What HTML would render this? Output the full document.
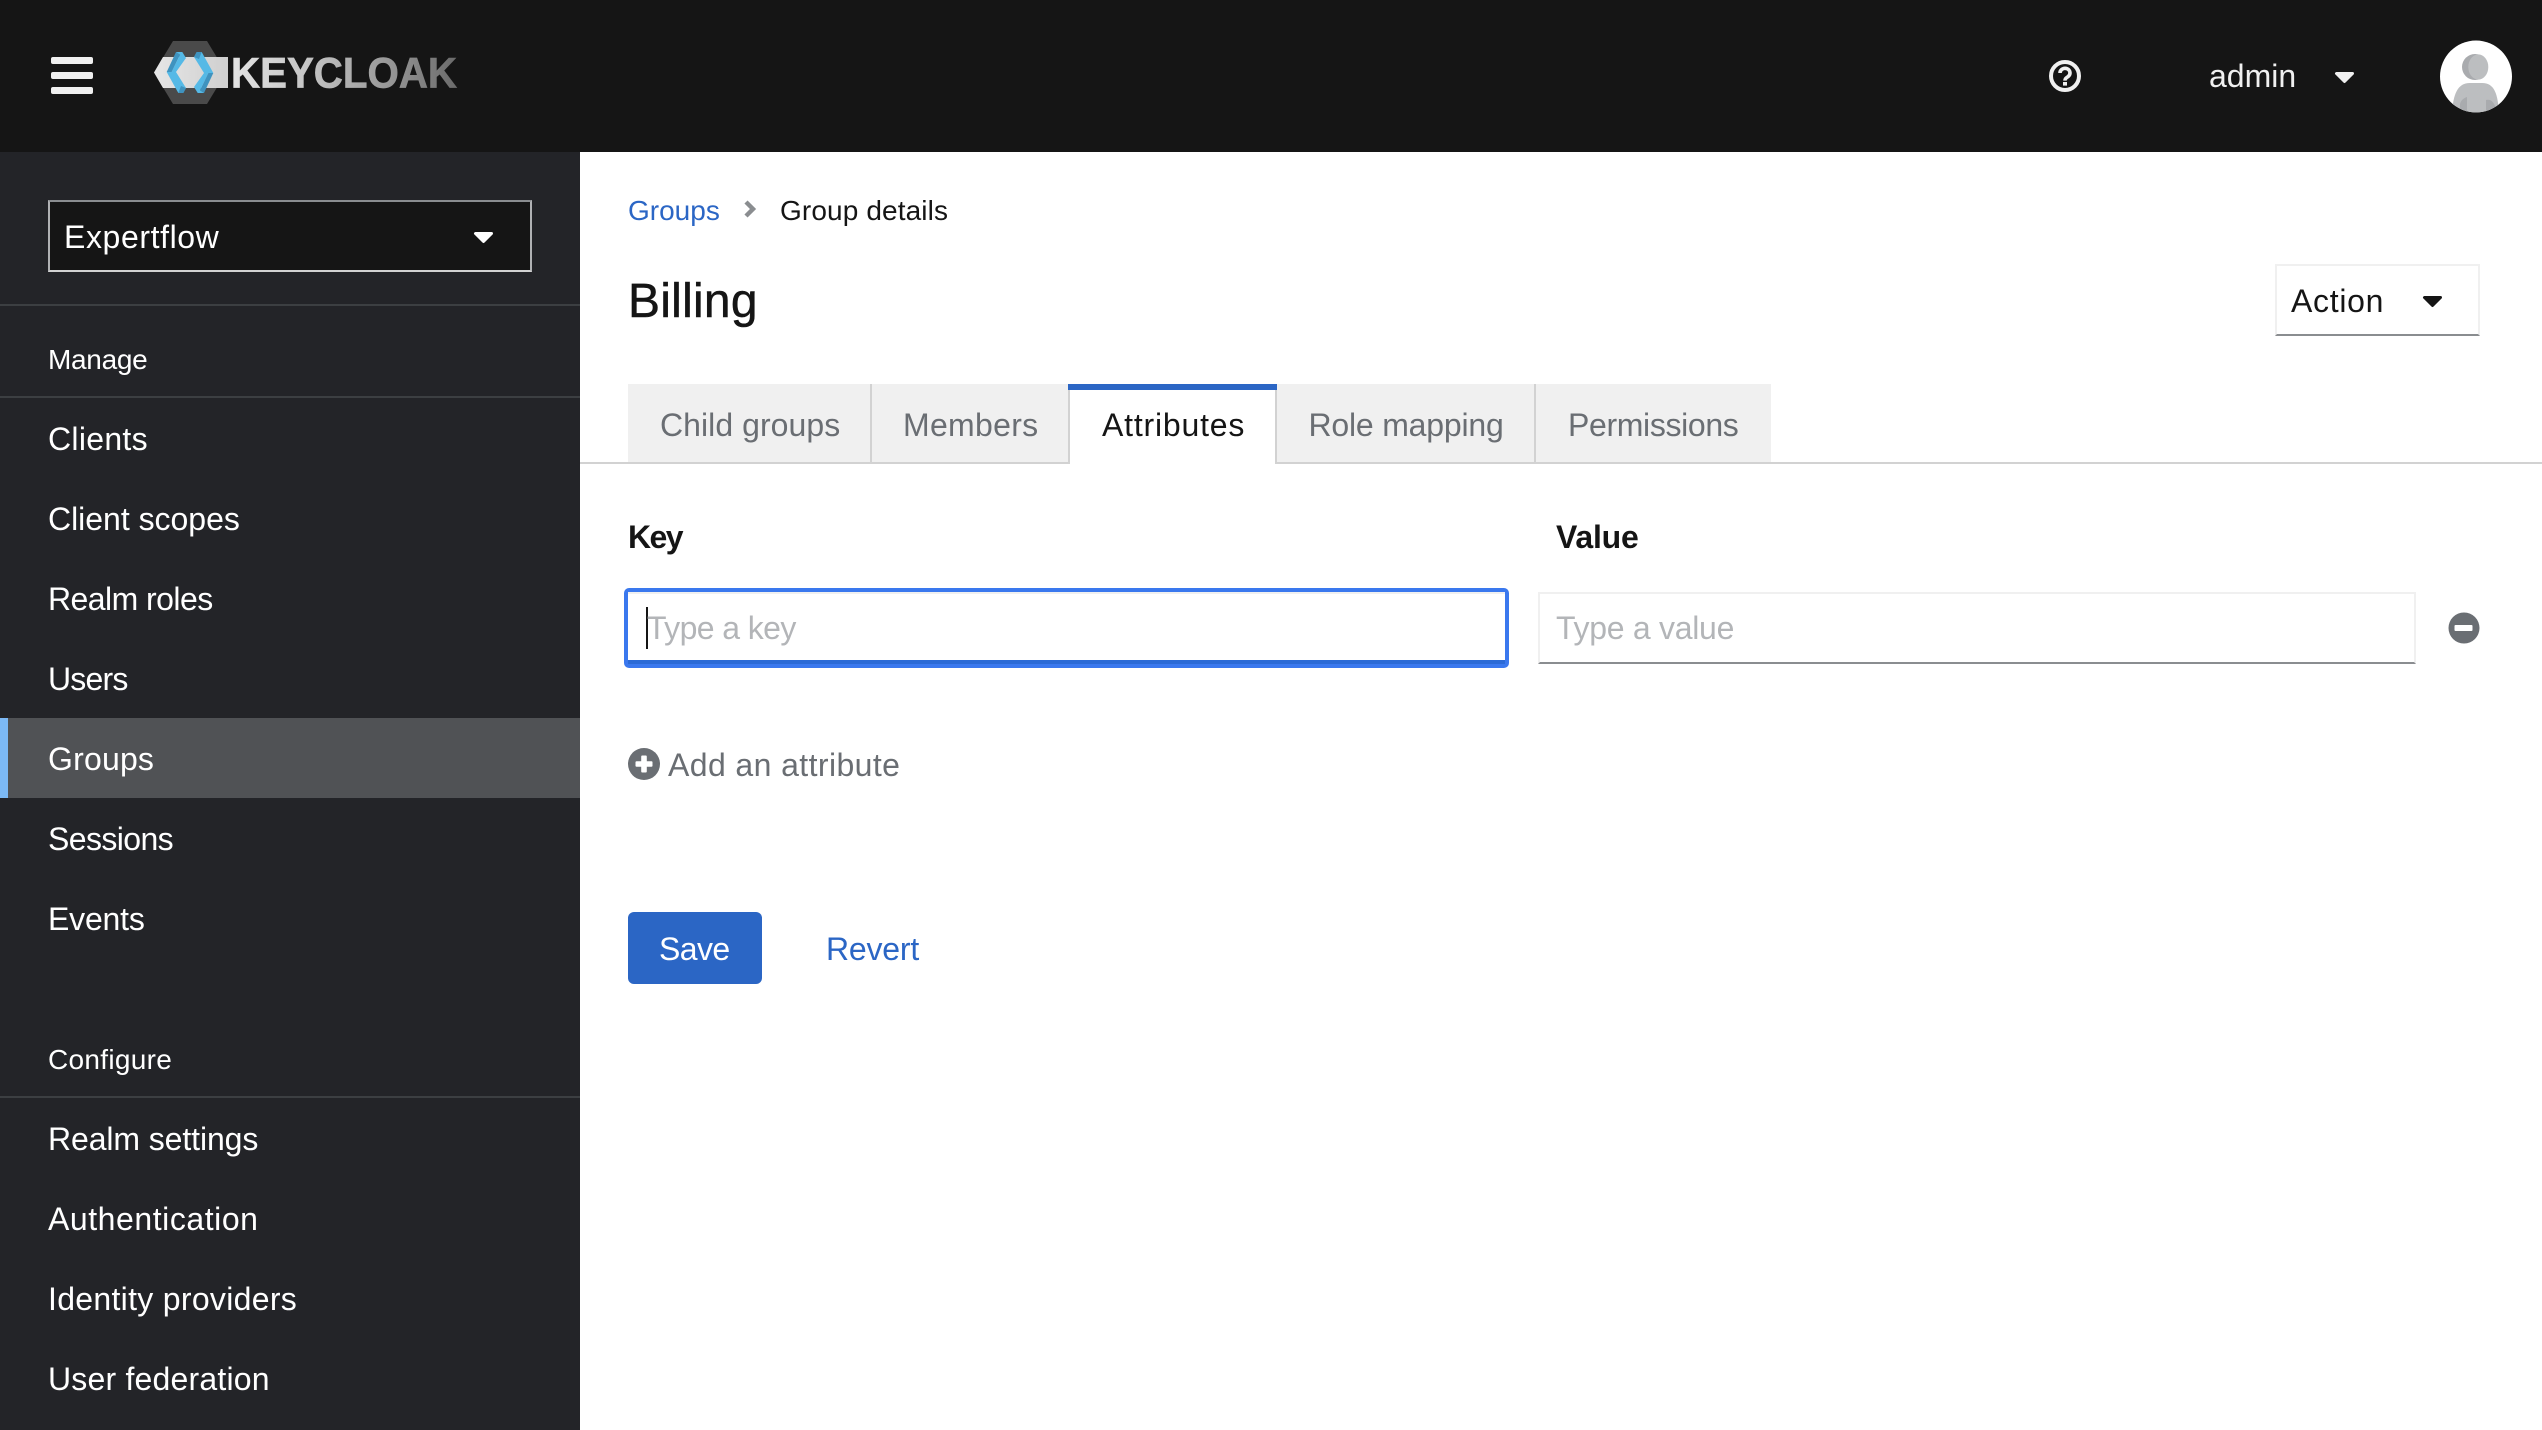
<!DOCTYPE html>
<html lang="en">
<head>
<meta charset="utf-8">
<title>Keycloak - Group details</title>
<style>
html,body{margin:0;padding:0;background:#fff}
body{position:relative;width:2542px;height:1430px;overflow:hidden;font-family:"Liberation Sans",sans-serif;-webkit-font-smoothing:antialiased}
.a,.t{position:absolute}
.t{white-space:nowrap;font-size:32px;line-height:40px}
.s{font-size:28px}
header{position:absolute;left:0;top:0;width:2542px;height:152px;background:#151515}
nav{position:absolute;left:0;top:152px;width:580px;height:1278px;background:#232428}
.bar{position:absolute;left:51px;width:42px;height:7px;border-radius:2px;background:#f0f0f0}
.row{position:absolute;left:0;width:580px;height:80px;line-height:82px;font-size:32px;color:#fff;white-space:nowrap;text-indent:48px}
.hd{position:absolute;left:48px;font-size:28px;line-height:40px;color:#fff;white-space:nowrap}
.div{position:absolute;left:0;width:580px;height:2px;background:#3c3f42}
.tab{position:absolute;top:384px;height:78px;background:#f0f0f0;box-sizing:border-box;border-right:2px solid #d2d2d2}
svg{position:absolute;overflow:visible}
</style>
</head>
<body>
<header>
  <div class="bar" style="top:57px"></div>
  <div class="bar" style="top:72px"></div>
  <div class="bar" style="top:87px"></div>
  <svg style="left:0;top:0" width="520" height="152" viewBox="0 0 520 152">
    <defs>
      <linearGradient id="kg" gradientUnits="userSpaceOnUse" x1="230" y1="0" x2="458" y2="0">
        <stop offset="0" stop-color="#e4e4e4"/><stop offset=".35" stop-color="#c4c4c4"/><stop offset=".7" stop-color="#979797"/><stop offset="1" stop-color="#6a6a6a"/>
      </linearGradient>
      <linearGradient id="bg" gradientUnits="userSpaceOnUse" x1="154" y1="0" x2="228" y2="0">
        <stop offset="0" stop-color="#e6e6e6"/><stop offset="1" stop-color="#cfcfcf"/>
      </linearGradient>
      <g id="chev">
        <polygon points="166.7,72 176,52 180,54.7 171.7,72" fill="#3f93bf"/>
        <polygon points="176,52 182.3,52 186,58 176,72 171.7,72 180,54.7" fill="#55b9e6"/>
        <polygon points="166.7,72 176,72 186,88 183.3,93 178.3,93" fill="#55b9e6"/>
        <polygon points="186,88 183.3,93 178.3,93 181,86" fill="#3f93bf"/>
      </g>
    </defs>
    <polygon points="173,41 207,41 226,72.5 207,104 173,104 154,72.5" fill="#4a4a4a"/>
    <polygon points="154,72.5 163,57 228,57 228,88 163,88" fill="url(#bg)"/>
    <use href="#chev"/>
    <use href="#chev" transform="rotate(180 190 72.5)"/>
    <text x="231" y="87.7" font-family="Liberation Sans" font-weight="700" font-size="43" textLength="226" lengthAdjust="spacingAndGlyphs" fill="url(#kg)" stroke="url(#kg)" stroke-width=".7">KEYCLOAK</text>
  </svg>
  <svg style="left:2049px;top:60px" width="32" height="32" viewBox="0 0 32 32">
    <circle cx="16" cy="16" r="14" fill="none" stroke="#f0f0f0" stroke-width="4"/>
    <path d="M11 13 a5 4.6 0 1 1 8 3.6 c-2 1.4 -3 2 -3 4" fill="none" stroke="#f0f0f0" stroke-width="3.6"/>
    <rect x="14" y="22" width="4" height="3.6" fill="#f0f0f0"/>
  </svg>
  <span class="t" style="left:2209px;top:56px;color:#f0f0f0">admin</span>
  <svg style="left:2335px;top:72px" width="19" height="11" viewBox="0 0 19 11"><polygon points="1.5,1.5 17.5,1.5 9.5,9.5" fill="#f0f0f0" stroke="#f0f0f0" stroke-width="3" stroke-linejoin="round"/></svg>
  <svg style="left:2440px;top:41px" width="72" height="72" viewBox="2440 41 72 72">
    <defs><clipPath id="av"><circle cx="2476" cy="76.5" r="36"/></clipPath></defs>
    <circle cx="2476" cy="76.5" r="36" fill="#fff"/>
    <g clip-path="url(#av)">
      <ellipse cx="2475" cy="67" rx="13" ry="13" fill="#a9abae"/>
      <ellipse cx="2478.3" cy="67" rx="10" ry="12.6" fill="#bcbec0"/>
      <path d="M2452 114 C2453 95 2457 83 2470 83 L2482 83 C2495 83 2498 95 2499 114 Z" fill="#bcbec0"/>
      <path d="M2460 114 L2460 104 C2461 100 2464 98 2467 97 L2467 114 Z M2495 114 L2495 106 C2493 101 2490 99 2486 100 L2486 114 Z" fill="#a9abae"/>
    </g>
  </svg>
</header>

<nav>
  <div class="a" style="left:48px;top:48px;width:484px;height:72px;box-sizing:border-box;background:#151515;border:2px solid #b0b2b4;border-top-color:#8a8d90;border-bottom-color:#d2d2d2"></div>
  <div class="div" style="top:152px"></div>
  <span class="hd" style="top:188.3px;letter-spacing:-.3px">Manage</span>
  <div class="div" style="top:244px"></div>
  <div class="row" style="top:246px;letter-spacing:.3px">Clients</div>
  <div class="row" style="top:326px;letter-spacing:-.02px">Client scopes</div>
  <div class="row" style="top:406px;letter-spacing:-.55px">Realm roles</div>
  <div class="row" style="top:486px;letter-spacing:-.8px">Users</div>
  <div class="row" style="top:566px;background:#505255;letter-spacing:.2px"><div class="a" style="left:0;top:0;width:8px;height:80px;background:#7cb9f5"></div>Groups</div>
  <div class="row" style="top:646px;letter-spacing:-.6px">Sessions</div>
  <div class="row" style="top:726px;letter-spacing:-.2px">Events</div>
  <span class="hd" style="top:887.8px;letter-spacing:.3px">Configure</span>
  <div class="div" style="top:944px"></div>
  <div class="row" style="top:946px;letter-spacing:-.1px">Realm settings</div>
  <div class="row" style="top:1026px;letter-spacing:.55px">Authentication</div>
  <div class="row" style="top:1106px;letter-spacing:.3px">Identity providers</div>
  <div class="row" style="top:1186px;letter-spacing:.2px">User federation</div>
</nav>
<span class="t" style="left:64px;top:216.5px;color:#fff;letter-spacing:.6px">Expertflow</span>
<svg style="left:474px;top:232px" width="19" height="11" viewBox="0 0 19 11"><polygon points="1.5,1.5 17.5,1.5 9.5,9.5" fill="#fff" stroke="#fff" stroke-width="3" stroke-linejoin="round"/></svg>

<main>
  <span class="t s" style="left:628px;top:191px;color:#2b66c5">Groups</span>
  <svg style="left:744px;top:200px" width="12" height="18" viewBox="0 0 12 18"><polyline points="2,2 9,9 2,16" fill="none" stroke="#8a8d90" stroke-width="4.4"/></svg>
  <span class="t s" style="left:780px;top:191px;color:#151515;letter-spacing:.12px">Group details</span>
  <span class="t" style="left:628px;top:272px;font-size:48px;line-height:60px;color:#151515;-webkit-text-stroke:.5px #151515;letter-spacing:.25px">Billing</span>

  <div class="a" style="left:2275px;top:264px;width:205px;height:72px;box-sizing:border-box;border:2px solid #f0f0f0;border-bottom-color:#8a8d90"></div>
  <span class="t" style="left:2291px;top:281px;color:#151515;letter-spacing:.7px">Action</span>
  <svg style="left:2423px;top:296px" width="19" height="11" viewBox="0 0 19 11"><polygon points="1.5,1.5 17.5,1.5 9.5,9.5" fill="#151515" stroke="#151515" stroke-width="3" stroke-linejoin="round"/></svg>

  <div class="a" style="left:580px;top:462px;width:1962px;height:2px;background:#d2d2d2"></div>
  <div class="tab" style="left:628px;width:244px"></div>
  <div class="tab" style="left:872px;width:197px;border-right:0"></div>
  <div class="a" style="left:1068px;top:384px;width:209px;height:80px;box-sizing:border-box;background:#fff;border-left:2px solid #d2d2d2;border-right:2px solid #d2d2d2"></div>
  <div class="a" style="left:1068px;top:384px;width:209px;height:6px;background:#2b66c5"></div>
  <div class="tab" style="left:1277px;width:259px"></div>
  <div class="tab" style="left:1536px;width:235px;border-right:0"></div>
  <span class="t" style="left:660px;top:405px;color:#6a6e73;letter-spacing:.05px">Child groups</span>
  <span class="t" style="left:903px;top:405px;color:#6a6e73;letter-spacing:.3px">Members</span>
  <span class="t" style="left:1102px;top:405px;color:#151515;letter-spacing:.8px">Attributes</span>
  <span class="t" style="left:1308.5px;top:405px;color:#6a6e73;letter-spacing:-.2px">Role mapping</span>
  <span class="t" style="left:1568px;top:405px;color:#6a6e73;letter-spacing:-.35px">Permissions</span>

  <span class="t" style="left:628px;top:517px;color:#151515;font-weight:700;letter-spacing:-1.6px">Key</span>
  <span class="t" style="left:1556px;top:517px;color:#151515;font-weight:700;letter-spacing:-.2px">Value</span>

  <div class="a" style="left:624px;top:588px;width:885px;height:80px;box-sizing:border-box;background:#fff;border:4px solid #3a78ee;border-radius:5px"></div>
  <div class="a" style="left:628px;top:592px;width:877px;height:2px;background:#f0f0f0"></div>
  <div class="a" style="left:628px;top:660px;width:877px;height:4px;background:#2b6ad6"></div>
  <div class="a" style="left:646px;top:607px;width:2px;height:42px;background:#151515"></div>
  <span class="t" style="left:647px;top:608px;color:#b3b5b8;letter-spacing:-.6px">Type a key</span>

  <div class="a" style="left:1538px;top:592px;width:878px;height:72px;box-sizing:border-box;border:2px solid #f0f0f0;border-bottom-color:#8a8d90"></div>
  <span class="t" style="left:1556px;top:608px;color:#b3b5b8;letter-spacing:-.28px">Type a value</span>
  <svg style="left:2448px;top:612px" width="32" height="32" viewBox="0 0 32 32"><circle cx="16" cy="16" r="15.5" fill="#6a6e73"/><rect x="6.5" y="13" width="18" height="6" rx="1" fill="#fff"/></svg>

  <svg style="left:628px;top:748px" width="32" height="32" viewBox="0 0 32 32"><circle cx="16" cy="16" r="16" fill="#6a6e73"/><rect x="7.5" y="13.2" width="17" height="5.6" rx="1" fill="#fff"/><rect x="13.2" y="7.5" width="5.6" height="17" rx="1" fill="#fff"/></svg>
  <span class="t" style="left:668px;top:745px;color:#6a6e73;letter-spacing:.4px">Add an attribute</span>

  <div class="a" style="left:628px;top:912px;width:134px;height:72px;background:#2b66c5;border-radius:6px"></div>
  <span class="t" style="left:659px;top:929px;color:#fff;letter-spacing:-.6px">Save</span>
  <span class="t" style="left:826px;top:929px;color:#2b66c5;letter-spacing:-.2px">Revert</span>
</main>
</body>
</html>
